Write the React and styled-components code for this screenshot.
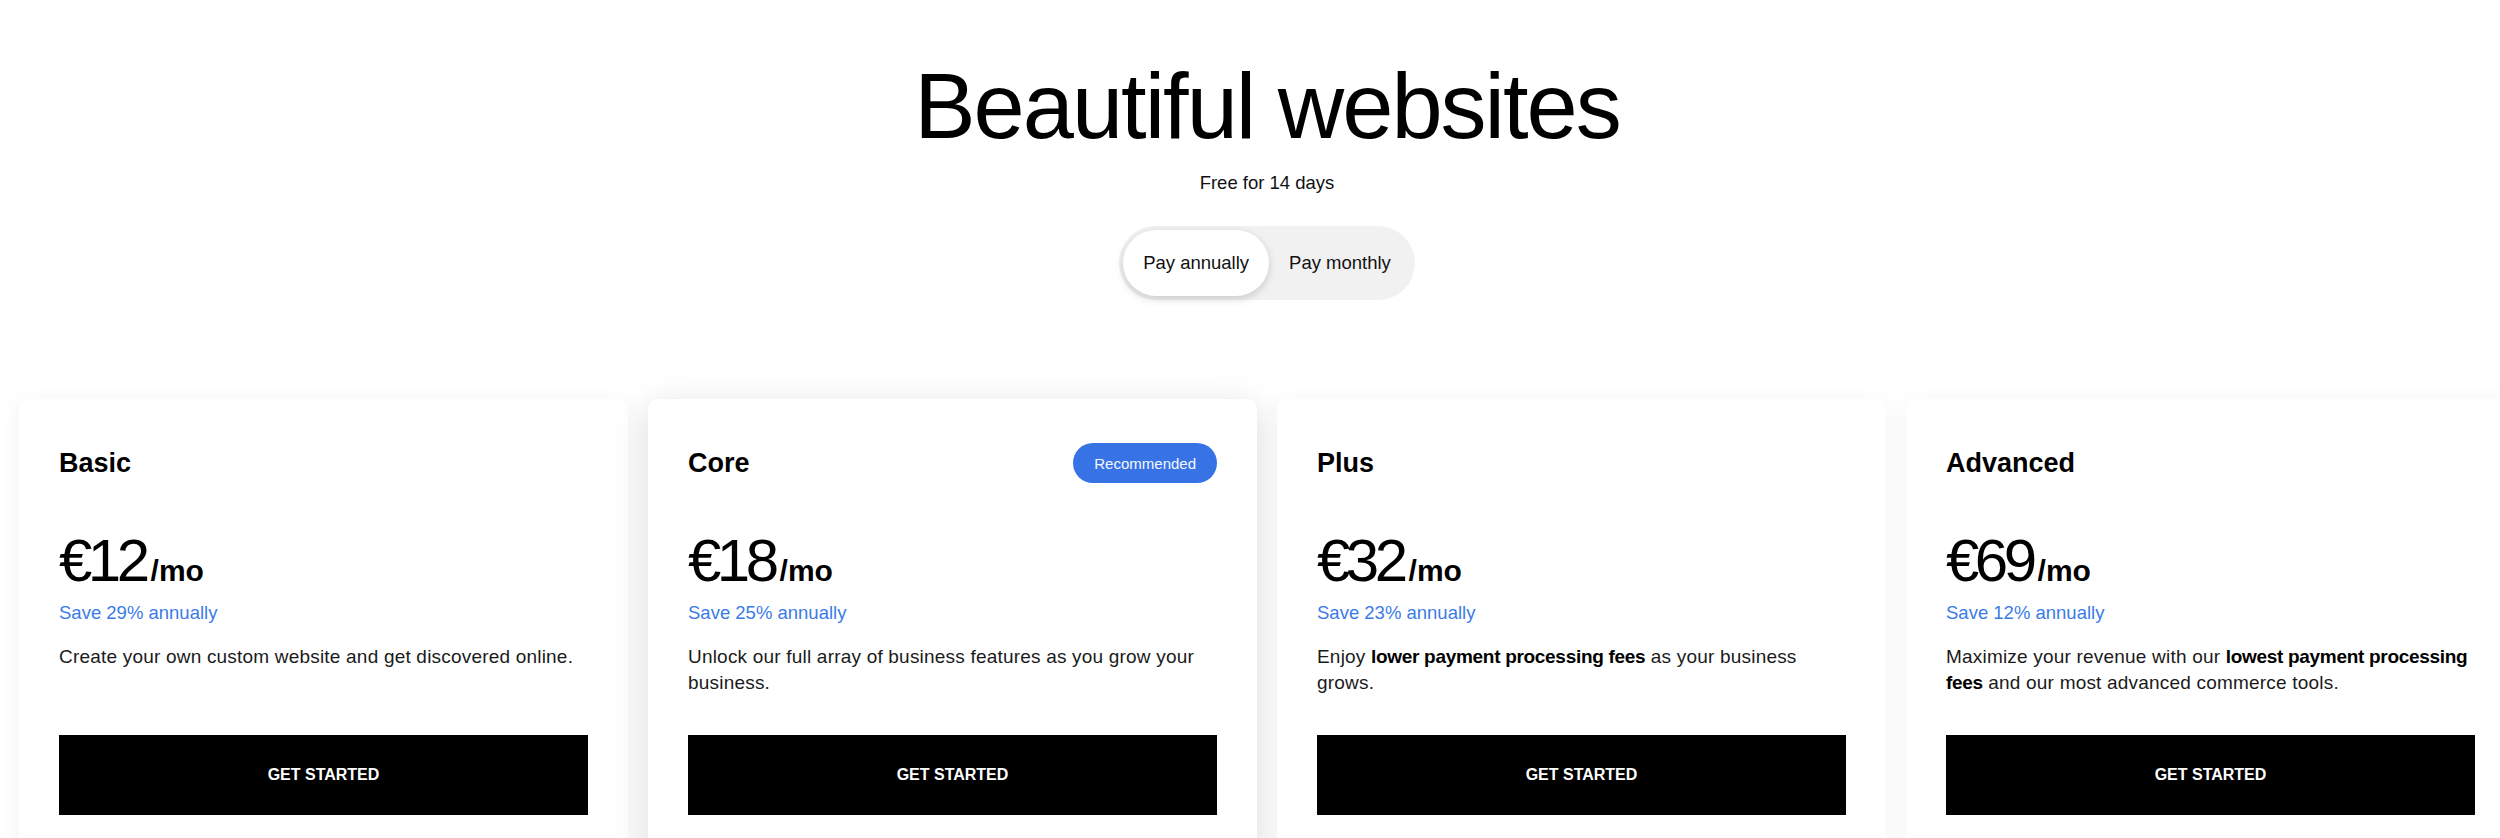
import React from "react";
import styled, { createGlobalStyle } from "styled-components";

const GlobalStyle = createGlobalStyle`
  html, body {
    margin: 0;
    padding: 0;
    background: #fff;
    overflow: hidden;
  }
  body {
    font-family: "Liberation Sans", Arial, sans-serif;
    color: #000;
    -webkit-font-smoothing: antialiased;
  }
`;

const Page = styled.main`
  width: 2534px;
  box-sizing: border-box;
  padding: 60px 19px 0;
  display: flex;
  flex-direction: column;
  align-items: center;
`;

const Heading = styled.h1`
  margin: 0;
  font-size: 92px;
  line-height: 92px;
  font-weight: 400;
  letter-spacing: -2px;
`;

const Subtitle = styled.p`
  margin: 18px 0 0;
  font-size: 18.5px;
  line-height: 26px;
  color: #111;
`;

const Toggle = styled.div`
  margin-top: 30px;
  display: flex;
  padding: 4px;
  border-radius: 999px;
  background: #f1f1f1;
`;

const ToggleOption = styled.button`
  border: 0;
  outline: 0;
  height: 66px;
  padding: 0 20px;
  border-radius: 999px;
  font-family: inherit;
  font-size: 18.5px;
  color: #111;
  cursor: pointer;
  background: ${(p) => (p.$active ? "#fff" : "transparent")};
  box-shadow: ${(p) => (p.$active ? "0 3px 8px rgba(0, 0, 0, 0.16)" : "none")};
`;

const Plans = styled.section`
  align-self: stretch;
  margin-top: 99px;
  display: grid;
  grid-template-columns: repeat(4, 609px);
  gap: 20px;
`;

const Card = styled.article`
  display: flex;
  flex-direction: column;
  padding: 44px 40px 40px;
  border-radius: 10px;
  background: #fff;
  box-shadow: ${(p) =>
    p.$featured
      ? "0 8px 34px rgba(0, 0, 0, 0.15)"
      : "0 4px 24px rgba(0, 0, 0, 0.05)"};
`;

const CardHeader = styled.div`
  display: flex;
  align-items: center;
  justify-content: space-between;
  min-height: 40px;
`;

const PlanName = styled.h2`
  margin: 0;
  font-size: 27px;
  line-height: 32px;
  font-weight: 700;
`;

const Badge = styled.span`
  display: inline-flex;
  align-items: center;
  height: 40px;
  padding: 0 21px;
  border-radius: 999px;
  background: #3873e6;
  color: #f4f7fe;
  font-size: 15px;
`;

const PriceRow = styled.div`
  display: flex;
  align-items: baseline;
  margin-top: 48px;
`;

const Amount = styled.span`
  font-size: 60px;
  line-height: 60px;
  letter-spacing: -4.5px;
`;

const Per = styled.span`
  font-size: 30px;
  line-height: 30px;
  font-weight: 700;
  margin-left: 5px;
`;

const Saving = styled.div`
  margin-top: 9px;
  font-size: 18.5px;
  line-height: 26px;
  color: #3b7be8;
`;

const Description = styled.p`
  margin: 18px 0 0;
  min-height: 52px;
  font-size: 19px;
  line-height: 26px;
  letter-spacing: 0.2px;
  color: #1a1a1a;

  strong {
    font-weight: 700;
    letter-spacing: -0.3px;
    color: #000;
  }
`;

const StartButton = styled.button`
  margin-top: 39px;
  height: 80px;
  border: 0;
  border-radius: 0;
  background: #000;
  color: #fff;
  font-family: inherit;
  font-size: 16px;
  font-weight: 700;
  cursor: pointer;
`;

const plans = [
  {
    name: "Basic",
    price: "€12",
    saving: "Save 29% annually",
    text: <>Create your own custom website and get discovered online.</>,
  },
  {
    name: "Core",
    price: "€18",
    saving: "Save 25% annually",
    featured: true,
    text: <>Unlock our full array of business features as you grow your business.</>,
  },
  {
    name: "Plus",
    price: "€32",
    saving: "Save 23% annually",
    text: (
      <>
        Enjoy <strong>lower payment processing fees</strong> as your business grows.
      </>
    ),
  },
  {
    name: "Advanced",
    price: "€69",
    saving: "Save 12% annually",
    text: (
      <>
        Maximize your revenue with our <strong>lowest payment processing fees</strong> and
        our most advanced commerce tools.
      </>
    ),
  },
];

function App() {
  return (
    <>
      <GlobalStyle />
      <Page>
        <Heading>Beautiful websites</Heading>
        <Subtitle>Free for 14 days</Subtitle>
        <Toggle>
          <ToggleOption $active>Pay annually</ToggleOption>
          <ToggleOption>Pay monthly</ToggleOption>
        </Toggle>
        <Plans>
          {plans.map((plan) => (
            <Card key={plan.name} $featured={plan.featured}>
              <CardHeader>
                <PlanName>{plan.name}</PlanName>
                {plan.featured && <Badge>Recommended</Badge>}
              </CardHeader>
              <PriceRow>
                <Amount>{plan.price}</Amount>
                <Per>/mo</Per>
              </PriceRow>
              <Saving>{plan.saving}</Saving>
              <Description>{plan.text}</Description>
              <StartButton>GET STARTED</StartButton>
            </Card>
          ))}
        </Plans>
      </Page>
    </>
  );
}

export default App;
